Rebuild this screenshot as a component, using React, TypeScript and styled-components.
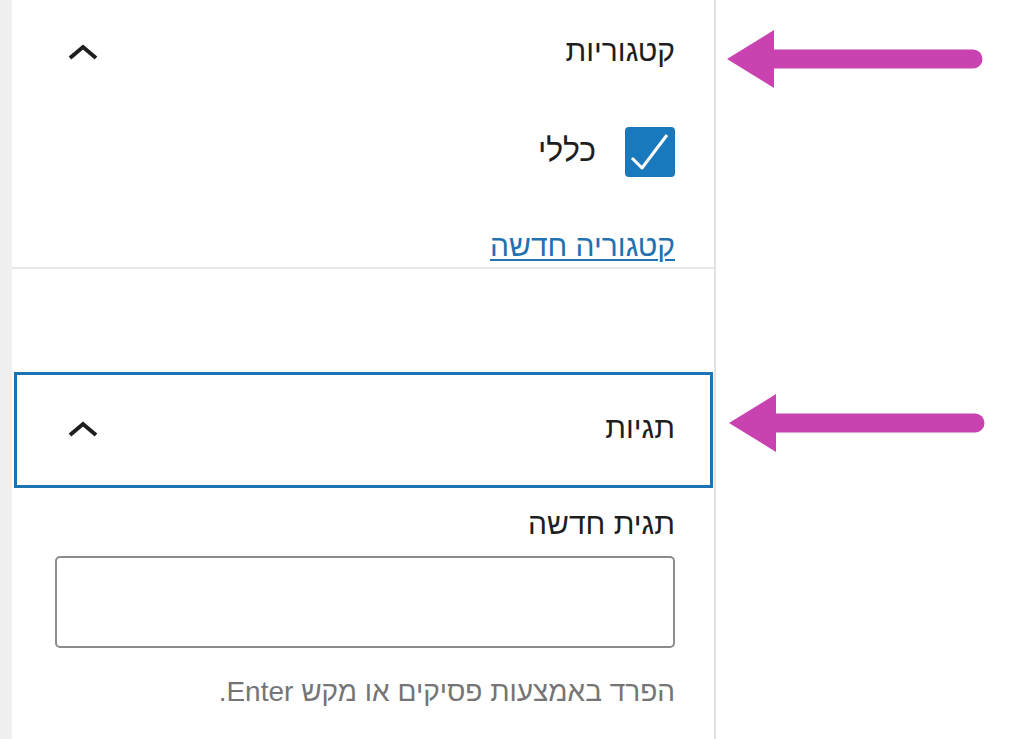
import * as React from 'react'
import styled, { createGlobalStyle } from 'styled-components'

const GlobalStyle = createGlobalStyle`
  html, body {
    margin: 0;
    padding: 0;
    background: #ffffff;
  }
  body {
    font-family: "Liberation Sans", "DejaVu Sans", Arial, sans-serif;
    color: #1e1e1e;
  }
`

const Page = styled.div`
  display: flex;
  width: 1023px;
  height: 739px;
  overflow: hidden;
  background: #ffffff;
`

const Gutter = styled.div`
  width: 12px;
  flex-shrink: 0;
  background: #f0f0f1;
`

const Sidebar = styled.aside`
  width: 702px;
  flex-shrink: 0;
  border-right: 2px solid #e2e2e2;
  direction: rtl;
  display: flex;
  flex-direction: column;
`

const Panel = styled.section`
  border-bottom: 2px solid #e6e6e6;
  padding-bottom: 4px;
`

const PanelHeader = styled.div<{ $focused?: boolean }>`
  display: flex;
  justify-content: space-between;
  align-items: center;
  box-sizing: border-box;
  height: ${(p) => (p.$focused ? '116px' : '106px')};
  padding: ${(p) => (p.$focused ? '0 35px 0 50px' : '0 39px 0 55px')};
  margin: ${(p) => (p.$focused ? '103px 1px 0 2px' : '0')};
  border: ${(p) => (p.$focused ? '3px solid #1b74b4' : 'none')};
`

const PanelTitle = styled.h2`
  margin: 0;
  font-size: 30px;
  font-weight: 400;
  line-height: 34px;
  color: #1e1e1e;
  padding-bottom: 4px;
`

const Chevron = styled.svg`
  width: 32px;
  height: 32px;
  display: block;
`

const PanelBody = styled.div<{ $top: number }>`
  padding: ${(p) => p.$top}px 39px 0 42px;
  display: flex;
  flex-direction: column;
  align-items: flex-start;
`

const CheckRow = styled.label`
  display: flex;
  align-items: center;
  gap: 29px;
  height: 50px;
`

const CheckBox = styled.span`
  width: 50px;
  height: 50px;
  border-radius: 4px;
  background: #1a78bc;
  display: flex;
  align-items: center;
  justify-content: center;
`

const CheckLabel = styled.span`
  font-size: 32px;
  line-height: 36px;
  color: #1e1e1e;
  padding-bottom: 4px;
`

const AddLink = styled.a`
  margin-top: 52px;
  font-size: 30px;
  line-height: 34px;
  color: #2271b1;
  text-decoration: underline;
  text-decoration-thickness: 2px;
  text-underline-offset: 3px;
`

const FieldLabel = styled.div`
  font-size: 30px;
  line-height: 34px;
  color: #1e1e1e;
`

const TagInput = styled.input`
  margin-top: 15px;
  box-sizing: border-box;
  width: 620px;
  height: 92px;
  border: 2px solid #8c8c8c;
  border-radius: 5px;
  background: #ffffff;
  font: inherit;
  font-size: 26px;
  padding: 0 16px;
  outline: none;
`

const Help = styled.p`
  margin: 28px 0 0;
  font-size: 28px;
  line-height: 32px;
  color: #757575;
`

const Annotations = styled.div`
  flex: 1;
  display: flex;
  flex-direction: column;
  padding-top: 29px;
  gap: 304px;
`

const Arrow = styled.svg<{ $offset: number }>`
  display: block;
  width: 256px;
  height: 60px;
  margin-left: ${(p) => p.$offset}px;
`

const ChevronUp = () => (
  <Chevron viewBox="0 0 32 32">
    <path d="M3 21 L16 10 L29 21" fill="none" stroke="#1e1e1e" strokeWidth="4" />
  </Chevron>
)

const PinkArrow = ({ offset }: { offset: number }) => (
  <Arrow $offset={offset} viewBox="0 0 256 60">
    <line x1="44" y1="30" x2="246" y2="30" stroke="#c843b0" strokeWidth="19" strokeLinecap="round" />
    <polygon points="0,30 47,1 47,59" fill="#c843b0" />
  </Arrow>
)

export default function App() {
  return (
    <>
      <GlobalStyle />
      <Page>
        <Gutter />
        <Sidebar>
          <Panel>
            <PanelHeader>
              <PanelTitle>קטגוריות</PanelTitle>
              <ChevronUp />
            </PanelHeader>
            <PanelBody $top={21}>
              <CheckRow>
                <CheckBox>
                  <svg width="50" height="50" viewBox="0 0 50 50">
                    <path d="M7 31 L17 41 L42 8" fill="none" stroke="#ffffff" strokeWidth="3" strokeLinejoin="round" />
                  </svg>
                </CheckBox>
                <CheckLabel>כללי</CheckLabel>
              </CheckRow>
              <AddLink href="#">קטגוריה חדשה</AddLink>
            </PanelBody>
          </Panel>

          <PanelHeader $focused>
            <PanelTitle>תגיות</PanelTitle>
            <ChevronUp />
          </PanelHeader>
          <PanelBody $top={19}>
            <FieldLabel>תגית חדשה</FieldLabel>
            <TagInput type="text" />
            <Help>הפרד באמצעות פסיקים או מקש Enter.</Help>
          </PanelBody>
        </Sidebar>
        <Annotations>
          <PinkArrow offset={11} />
          <PinkArrow offset={13} />
        </Annotations>
      </Page>
    </>
  )
}
